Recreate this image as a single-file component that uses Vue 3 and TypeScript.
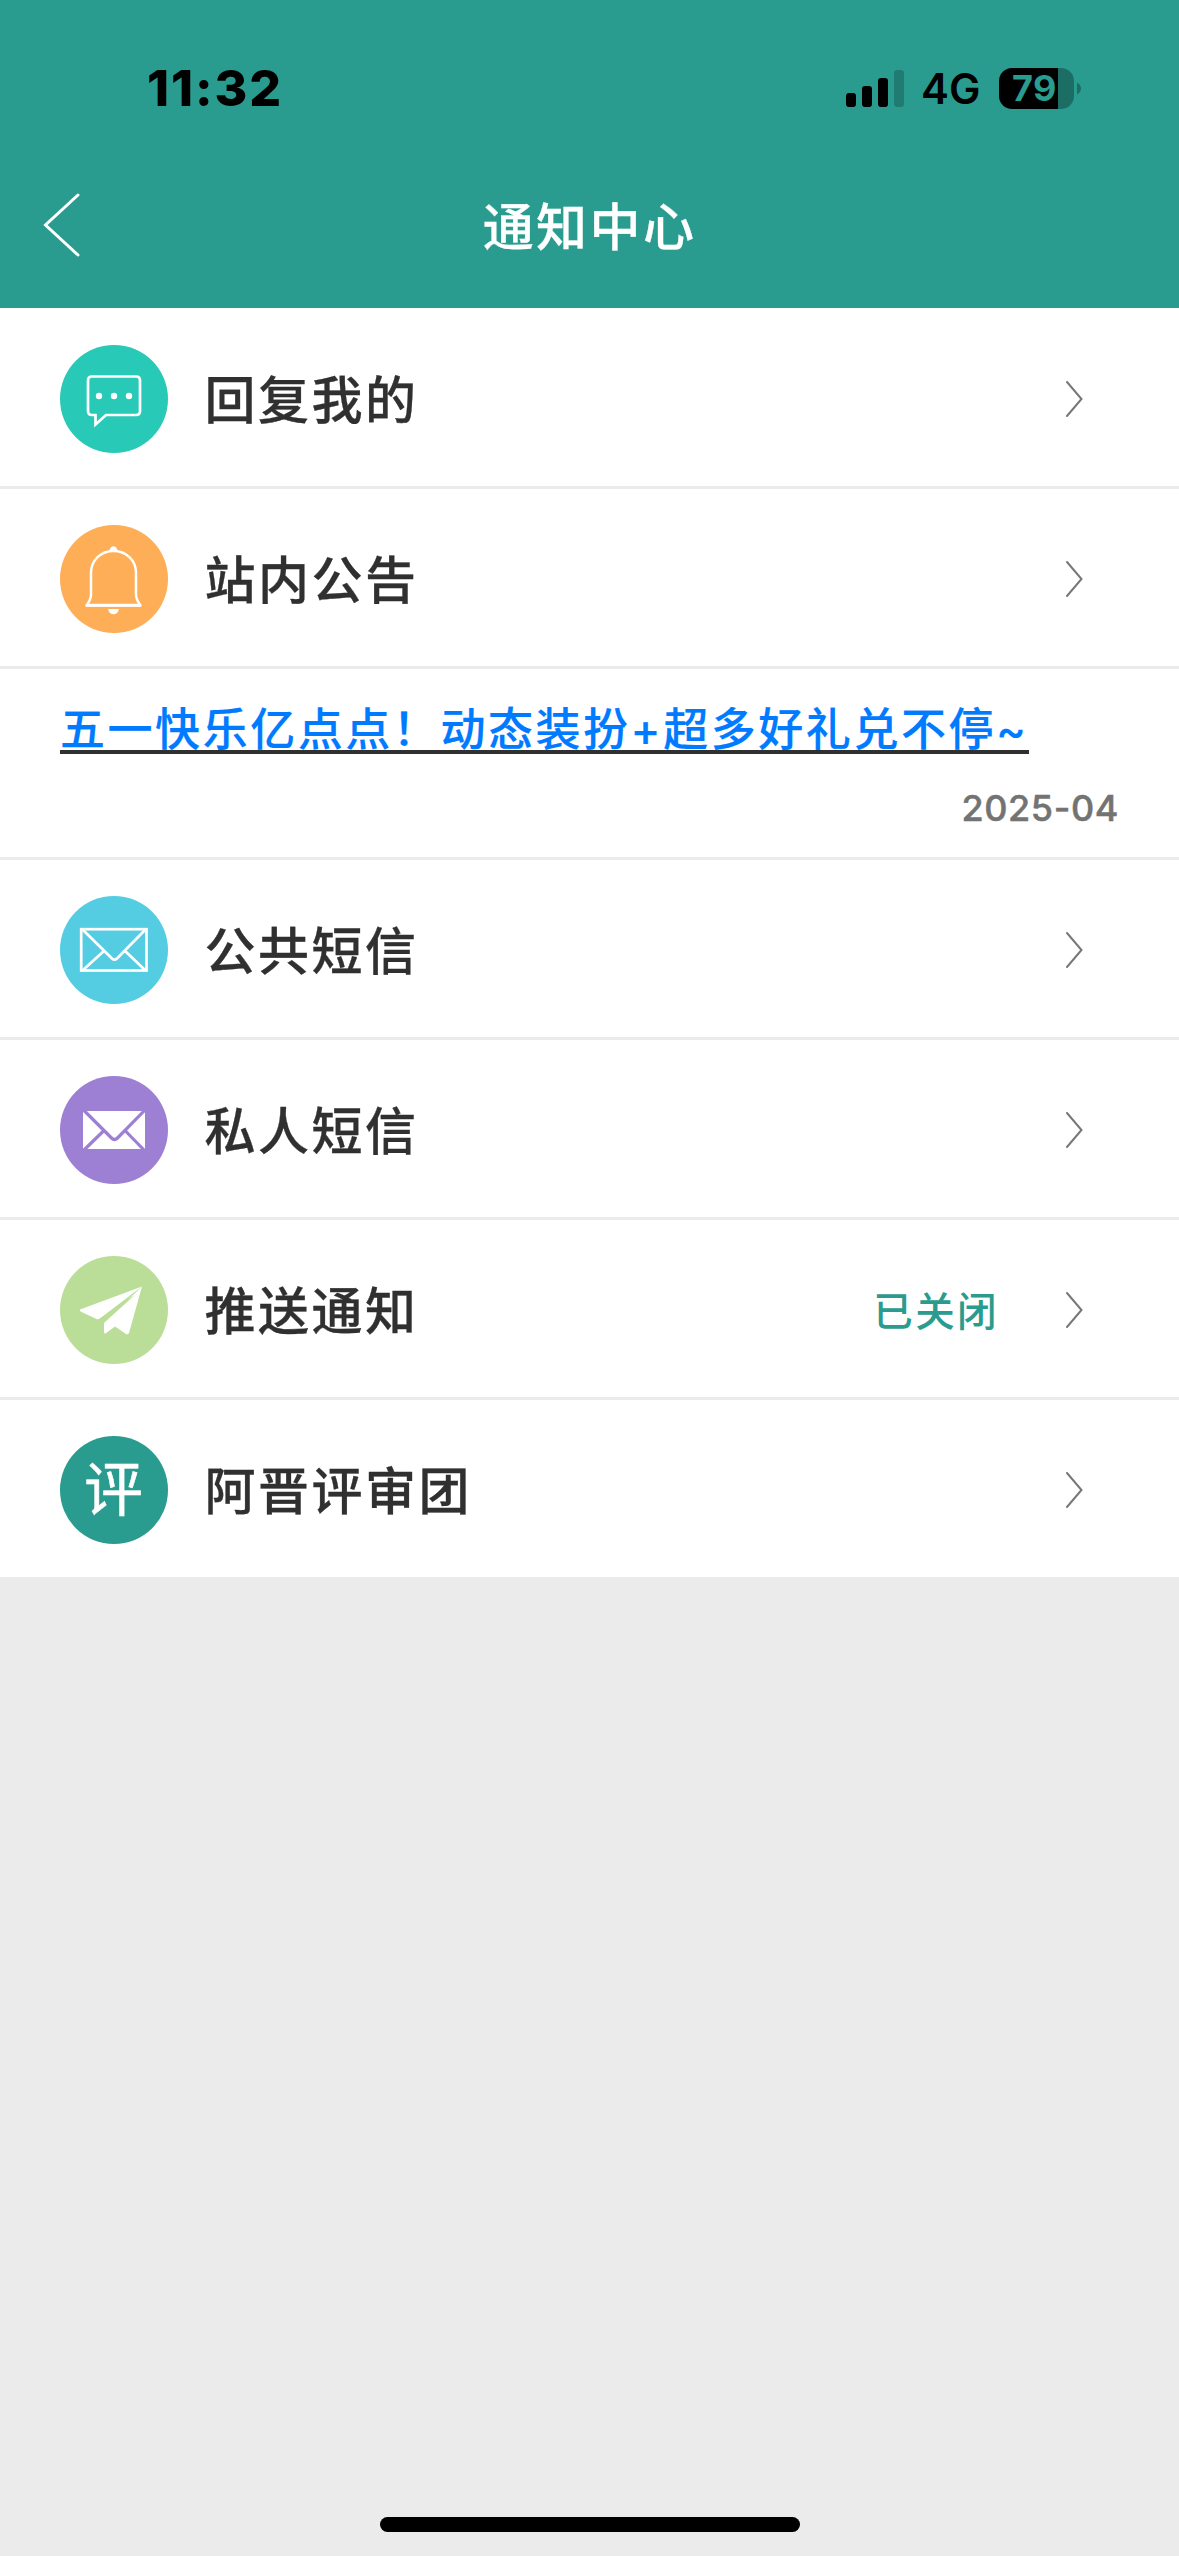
<script setup lang="ts">
type IconName = 'chat' | 'bell' | 'mail' | 'mailSolid' | 'plane' | 'review'

interface Entry {
  label: string
  icon: IconName
  color: string
  status?: string
  notice?: { title: string; date: string }
}

const entries: Entry[] = [
  { label: '回复我的', icon: 'chat', color: '#28c9b7' },
  {
    label: '站内公告',
    icon: 'bell',
    color: '#fdae57',
    notice: { title: '五一快乐亿点点！动态装扮+超多好礼兑不停~', date: '2025-04' },
  },
  { label: '公共短信', icon: 'mail', color: '#54cde3' },
  { label: '私人短信', icon: 'mailSolid', color: '#9d80d4' },
  { label: '推送通知', icon: 'plane', color: '#bade98', status: '已关闭' },
  { label: '阿晋评审团', icon: 'review', color: '#299c8f' },
]
</script>

<template>
  <div class="screen">
    <header class="header">
      <div class="status-bar">
        <span class="time">11:32</span>
        <div class="indicators">
          <svg class="signal" width="58" height="37" viewBox="0 0 58 37">
            <rect x="0" y="23" width="10" height="14" rx="3" />
            <rect x="16" y="16" width="10" height="21" rx="3" />
            <rect x="32" y="8" width="10" height="29" rx="3" />
            <rect x="48" y="0" width="10" height="37" rx="3" opacity="0.2" />
          </svg>
          <span class="network">4G</span>
          <div class="battery">
            <svg width="83" height="41" viewBox="0 0 83 41">
              <path d="M59 0H62A13 13 0 0 1 75 13V28A13 13 0 0 1 62 41H59Z" opacity="0.3" />
              <path d="M59 0H13A13 13 0 0 0 0 13V28A13 13 0 0 0 13 41H59Z" />
              <path d="M78 14.500Q82 17 82 20.500T78 26.500Z" opacity="0.3" />
            </svg>
            <span class="level">79</span>
          </div>
        </div>
      </div>
      <div class="nav">
        <svg class="back" width="40" height="66" viewBox="0 0 40 66">
          <path d="M37 3L4.500 33L37 63" fill="none" stroke="#fff" stroke-width="3" stroke-linecap="round" />
        </svg>
        <h1 class="title">通知中心</h1>
      </div>
    </header>

    <main class="list">
      <template v-for="entry in entries" :key="entry.label">
        <div class="row">
          <svg class="icon" width="108" height="108" viewBox="0 0 108 108">
            <circle cx="54" cy="54" r="54" :fill="entry.color" />
            <g v-if="entry.icon === 'chat'">
              <path d="M32 31.500H76Q80 31.500 80 35.500V66Q80 70 76 70H46L35.500 79.500V70H32Q28 70 28 66V35.500Q28 31.500 32 31.500Z" fill="none" stroke="#fff" stroke-width="2.700" />
              <circle cx="39" cy="51" r="3.200" fill="#fff" />
              <circle cx="54" cy="51" r="3.200" fill="#fff" />
              <circle cx="69" cy="51" r="3.200" fill="#fff" />
            </g>
            <g v-else-if="entry.icon === 'bell'" stroke-linejoin="round">
              <path d="M26.500 80.500C29 77 31 74 31 70V48C31 35 41 26 53.500 26S76 35 76 48V70C76 74 78 77 80.500 80.500Z" fill="none" stroke="#fff" stroke-width="2.500" />
              <path d="M26 80.200H81" stroke="#fff" stroke-width="2.800" />
              <path d="M49.500 26C49.500 19.500 57.500 19.500 57.500 26Z" fill="#fff" />
              <path d="M48 84H59C58 91 49 91 48 84Z" fill="#fff" />
            </g>
            <g v-else-if="entry.icon === 'mail'" fill="none" stroke="#fff" stroke-width="2.700">
              <rect x="21.200" y="33.200" width="65.300" height="41.300" />
              <path d="M23 34L52 62.500Q54.500 64.800 57 62.500L85 34M44.500 54.500L23 74M64.500 54.500L85 74" />
            </g>
            <g v-else-if="entry.icon === 'mailSolid'">
              <rect x="23" y="35" width="62" height="38" fill="#fff" />
              <path d="M23.500 34L51.500 62Q54.500 65 57.500 62L85 34M44.500 54L24 74M64.500 54L84 74" fill="none" :stroke="entry.color" stroke-width="3.200" />
            </g>
            <g v-else-if="entry.icon === 'plane'" fill="#fff">
              <path d="M82 30.500L20 53.500Q19.500 55 21 55.800L37 63.300Q39 63.500 40.500 62Z" />
              <path d="M82 30.500L69 77Q68 79 66 78L55 70.500L45.500 77.500Q44 78 44 76V66.500Z" />
              <path d="M39.500 63L75.500 38.500L43.800 67Z" :fill="entry.color" />
            </g>
            <text v-else class="glyph" x="53.500" y="74.500" text-anchor="middle">评</text>
          </svg>
          <span class="label">{{ entry.label }}</span>
          <span v-if="entry.status" class="status">{{ entry.status }}</span>
          <svg class="chevron" width="20" height="40" viewBox="0 0 20 40">
            <path d="M3 3L17.500 20L3 37" fill="none" stroke="#777" stroke-width="2" stroke-linecap="round" />
          </svg>
        </div>
        <div v-if="entry.notice" class="notice">
          <a class="notice-title">{{ entry.notice.title }}</a>
          <span class="notice-date">{{ entry.notice.date }}</span>
        </div>
      </template>
    </main>

    <div class="home-indicator"></div>
  </div>
</template>

<style>
body {
  margin: 0;
  background: #ebebeb;
}
</style>

<style scoped>
.screen {
  display: flex;
  flex-direction: column;
  width: 1179px;
  height: 2556px;
  background: #ebebeb;
  font-family: Inter, 'Noto Sans CJK SC', sans-serif;
  font-weight: 500;
}
.header {
  height: 308px;
  background: #299c8f;
}
.status-bar {
  display: flex;
  justify-content: space-between;
  align-items: center;
  height: 176px;
  padding: 0 97px 0 147px;
  box-sizing: border-box;
}
.time {
  font-size: 50px;
  font-weight: 800;
  line-height: 60px;
  letter-spacing: 1.900px;
}
.indicators {
  display: flex;
  align-items: center;
}
.network {
  margin: 2px 0 0 17px;
  font-size: 42px;
  font-weight: 600;
  line-height: 50px;
  width: 59px;
}
.battery {
  position: relative;
  display: flex;
  margin-left: 19px;
}
.level {
  position: absolute;
  left: 13px;
  top: 0;
  line-height: 41px;
  font-size: 36px;
  font-weight: 700;
  letter-spacing: 0.500px;
  color: #299c8f;
}
.nav {
  display: flex;
  align-items: center;
  height: 98px;
  padding: 0 41px;
}
.title {
  flex: 1;
  margin: 6px 40px 0 0;
  text-align: center;
  font-size: 51px;
  line-height: 60px;
  font-weight: 500;
  letter-spacing: 2.400px;
  color: #fff;
  -webkit-text-stroke: 0.300px #fff;
}
.list {
  padding-top: 1px;
  background: #fff;
}
.row {
  display: flex;
  align-items: center;
  height: 180px;
  box-sizing: border-box;
  padding: 3px 95px 0 60px;
  border-bottom: 3px solid #ebebeb;
}
.icon {
  margin-right: 36.500px;
}
.glyph {
  font-family: 'Noto Sans CJK SC', sans-serif;
  font-size: 59px;
  font-weight: 400;
  fill: #fff;
  stroke: #fff;
  stroke-width: 0.500px;
}
.label {
  flex: 1;
  margin-top: 3px;
  font-size: 51px;
  line-height: 60px;
  letter-spacing: 2.500px;
  color: #303030;
  -webkit-text-stroke: 0.300px #303030;
}
.status {
  margin: -4px 65px 0 0;
  font-size: 39.500px;
  letter-spacing: 2.400px;
  color: #299c8f;
}
.notice {
  display: flex;
  flex-direction: column;
  height: 191px;
  box-sizing: border-box;
  padding: 31px 60px 0;
  border-bottom: 3px solid #ebebeb;
}
.notice-title {
  align-self: flex-start;
  height: 50px;
  line-height: 60px;
  border-bottom: 4px solid #303030;
  font-size: 45px;
  letter-spacing: 2.550px;
  white-space: nowrap;
  color: #007aff;
  -webkit-text-stroke: 0.200px #007aff;
}
.notice-date {
  align-self: flex-end;
  margin-top: 32px;
  line-height: 44px;
  font-size: 36px;
  letter-spacing: 0.600px;
  color: #737373;
  -webkit-text-stroke: 0.500px #737373;
}
.home-indicator {
  width: 420px;
  height: 15px;
  margin: auto auto 24px;
  border-radius: 8px;
  background: #000;
}
</style>
